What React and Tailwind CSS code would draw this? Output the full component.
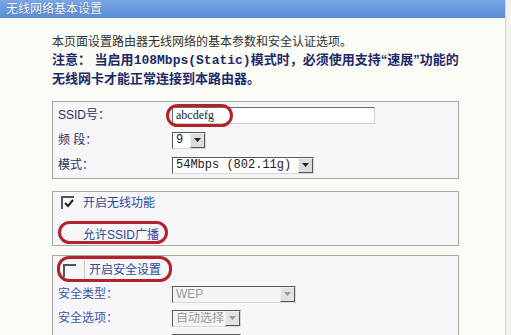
import React from 'react'

const cjk = { fontFamily: '"Liberation Sans", "Noto Sans CJK SC", sans-serif' }
const mono = { fontFamily: '"Liberation Mono", "Noto Sans CJK SC", monospace' }

function Select({ value, width, disabled, ascii }) {
  return (
    <div
      className={`flex h-[17px] items-center border border-t-[#5a5a5a] border-l-[#5a5a5a] border-b-[#d8d8d8] border-r-[#d8d8d8] ${
        disabled ? 'bg-[#f4f4f4] text-[#9a9a9a]' : 'bg-white text-[#222]'
      } ${width}`}
    >
      <span className="flex-1 truncate pl-[3px] text-[12px] leading-none" style={ascii ? mono : cjk}>
        {value}
      </span>
      <span
        className={`flex h-[15px] w-[15px] items-center justify-center border border-[#f0f0f0] border-b-[#555] border-r-[#555] ${
          disabled ? 'bg-[#e2e2e2]' : 'bg-[#dcdcdc]'
        }`}
      >
        <svg width="7" height="4" viewBox="0 0 7 4">
          <path d="M0 0h7L3.5 4z" fill={disabled ? '#999' : '#222'} />
        </svg>
      </span>
    </div>
  )
}

function Checkbox({ checked }) {
  return (
    <span className="flex h-[13px] w-[13px] items-center justify-center border-l-2 border-t-2 border-l-[#555] border-t-[#555] bg-transparent">
      {checked && (
        <svg width="10" height="10" viewBox="0 0 10 10">
          <path d="M1 4l3 3 5-6" stroke="#222" strokeWidth="2" fill="none" />
        </svg>
      )}
    </span>
  )
}

function Oval({ className }) {
  return (
    <span
      className={`pointer-events-none absolute rounded-[12px] border-[3px] border-[#b3222c] ${className}`}
    />
  )
}

export default function App() {
  return (
    <div className="h-[335px] w-[511px] overflow-hidden bg-[#fbfbf6]" style={cjk}>
      <div className="flex h-full">
        <div className="flex flex-1 flex-col">
          <div className="flex h-[25px] items-center bg-gradient-to-b from-[#78a6e6] to-[#5b8cd6] pl-[6px] text-[12px] text-white [text-shadow:0_0_1px_#2a4d8c]">
            无线网络基本设置
          </div>
          <div className="flex flex-col pl-[52px] pr-[46px] pt-[15px]">
            <div className="text-[12px] leading-[18px] text-[#333]">
              本页面设置路由器无线网络的基本参数和安全认证选项。
            </div>
            <div className="whitespace-nowrap text-[13px] font-bold leading-[18px] text-[#1c2a6a]">
              注意：&nbsp;当启用<span style={mono}>108Mbps(Static)</span>模式时，必须使用支持“速展”功能的
            </div>
            <div className="text-[13px] font-bold leading-[18px] text-[#1c2a6a]">
              无线网卡才能正常连接到本路由器。
            </div>

            <div className="mt-[13px] flex h-[78px] flex-col justify-center gap-[7px] border border-[#a8a8a8] bg-[#f6f5f7] pl-[5px]">
              <div className="flex items-center">
                <span className="w-[114px] text-[12px] text-[#2a3560]">SSID号：</span>
                <div className="relative">
                  <div className="flex h-[17px] w-[203px] items-center border border-t-[#6a6a6a] border-l-[#6a6a6a] border-b-[#d0d0d0] border-r-[#d0d0d0] bg-white pl-[3px] text-[12px] text-[#222]" style={{ fontFamily: '"Liberation Serif", serif' }}>
                    abcdefg
                  </div>
                  <Oval className="left-[-6px] top-[-3px] h-[23px] w-[67px]" />
                </div>
              </div>
              <div className="flex items-center">
                <span className="w-[114px] text-[12px] text-[#2a3560]">频 段：</span>
                <Select value="9" width="w-[34px]" ascii />
              </div>
              <div className="flex items-center">
                <span className="w-[114px] text-[12px] text-[#2a3560]">模式：</span>
                <Select value="54Mbps (802.11g)" width="w-[142px]" ascii />
              </div>
            </div>

            <div className="mt-[12px] flex h-[55px] flex-col justify-center gap-[14px] border border-[#a8a8a8] bg-[#f6f5f7] pl-[8px]">
              <div className="flex items-center gap-[9px]">
                <Checkbox checked />
                <span className="text-[12px] text-[#2f4a96]">开启无线功能</span>
              </div>
              <div className="relative flex items-center gap-[9px]">
                <span className="h-[13px] w-[13px]" />
                <span className="text-[12px] text-[#2f4a96]">允许SSID广播</span>
                <Oval className="left-[-3px] top-[-5px] h-[23px] w-[110px]" />
              </div>
            </div>

            <div className="mt-[9px] flex flex-1 flex-col gap-[6px] border border-[#a8a8a8] bg-[#f6f5f7] pl-[5px] pt-[5px]">
              <div className="relative flex items-center gap-[8px] pl-[5px]">
                <Checkbox />
                <span className="border-l border-[#ccc] pl-[4px] text-[12px] text-[#2f4a96]">开启安全设置</span>
                <Oval className="left-[-1px] top-[-5px] h-[26px] w-[115px]" />
              </div>
              <div className="flex items-center">
                <span className="w-[114px] text-[12px] text-[#3d5aa8]">安全类型：</span>
                <Select value="WEP" width="w-[124px]" disabled />
              </div>
              <div className="flex items-center">
                <span className="w-[114px] text-[12px] text-[#3d5aa8]">安全选项：</span>
                <Select value="自动选择" width="w-[69px]" disabled />
              </div>
              <div className="flex items-center">
                <span className="w-[114px] text-[12px] text-[#3d5aa8]">密钥格式选择：</span>
                <Select value="十六进制" width="w-[69px]" disabled />
              </div>
            </div>
          </div>
        </div>
        <div className="w-[6px] border-l border-[#d4d4cc] bg-[#f1f1ea]" />
      </div>
    </div>
  )
}
